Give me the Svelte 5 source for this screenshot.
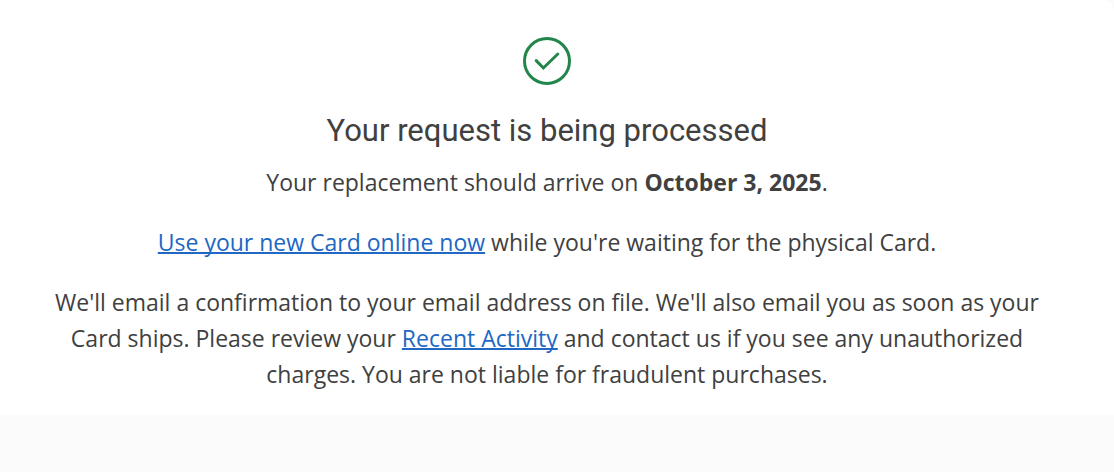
<script lang="ts">
	const arrivalDate = 'October 3, 2025';
</script>

<main class="page">
	<section class="card">
		<svg class="status-icon" viewBox="0 0 48 48" aria-hidden="true">
			<circle cx="24" cy="24" r="22.5" />
			<path d="M13.2 23.6 20.4 31 34.8 17" />
		</svg>

		<h1>Your request is being processed</h1>

		<p>Your replacement should arrive on <strong>{arrivalDate}</strong>.</p>

		<p>
			<a href="#use-card">Use your new Card online now</a> while you're waiting for the physical Card.
		</p>

		<p>
			We'll email a confirmation to your email address on file. We'll also email you as soon as your
			Card ships. Please review your <a href="#activity">Recent Activity</a> and contact us if you see
			any unauthorized charges. You are not liable for fraudulent purchases.
		</p>
	</section>
</main>

<style>
	:global(body) {
		margin: 0;
		background: #fbfbfb;
	}

	.page {
		color: #404040;
		font-family: 'Open Sans', 'Noto Sans', sans-serif;
	}

	.card {
		display: flex;
		flex-direction: column;
		align-items: center;
		padding: 37px 66px 23px 46px;
		background: #fff;
		border-top-right-radius: 12px;
		text-align: center;
	}

	.status-icon {
		width: 48px;
		height: 48px;
		fill: none;
		stroke: #22854a;
		stroke-width: 3;
		stroke-linecap: round;
	}

	h1 {
		margin: 26px 0 13px;
		font-family: Roboto, sans-serif;
		font-size: 31px;
		font-weight: 400;
		line-height: 40px;
	}

	p {
		margin: 0 0 24px;
		font-size: 23px;
		line-height: 36px;
	}

	p:last-child {
		margin-bottom: 0;
	}

	strong {
		font-weight: 700;
	}

	a {
		color: #2167c4;
		text-decoration: underline;
		text-decoration-thickness: 2px;
		text-decoration-skip-ink: none;
		text-underline-offset: 1px;
	}
</style>
